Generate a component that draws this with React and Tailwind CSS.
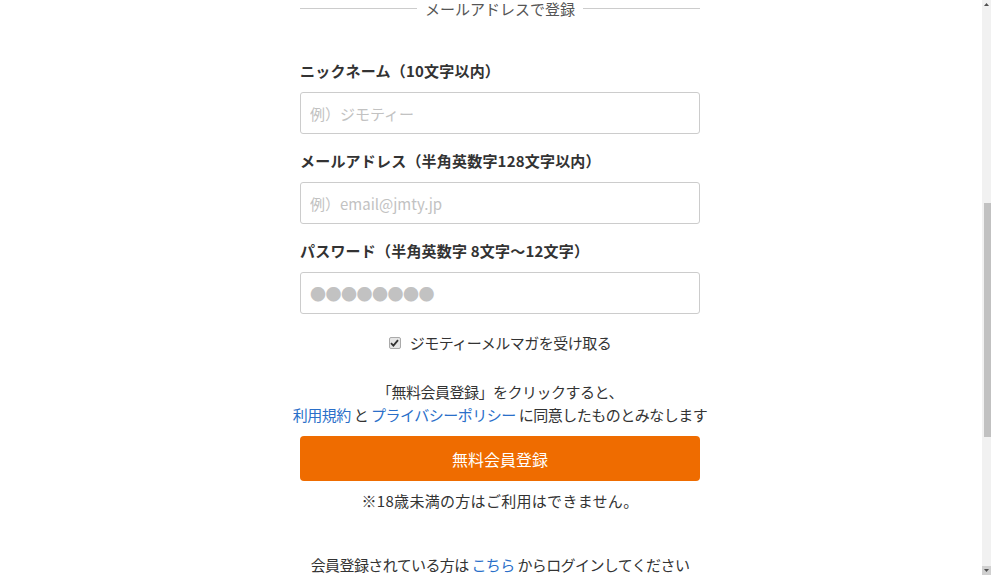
import React from 'react';

const FONT = 'font-["Noto_Sans_CJK_JP","Noto_Sans",sans-serif]';

function Field({ label, placeholder, dots, first }) {
  return (
    <div className={first ? '' : 'mt-4'}>
      <div className="text-[15px] font-bold leading-[22px] text-[#333] mb-[10px] tracking-[0.2px]">{label}</div>
      <input
        placeholder={placeholder}
        className={`block w-full h-[42px] border border-[#ccc] rounded-[3px] px-[9px] text-[15px] outline-none placeholder:text-[#c2c2c2] ${dots ? 'placeholder:text-[16px] placeholder:tracking-[-0.5px]' : ''}`}
      />
    </div>
  );
}

export default function App() {
  return (
    <div className={`flex h-[575px] overflow-hidden bg-white text-[#333] ${FONT}`}>
      <div className="flex-1">
        <div className="ml-[300px] w-[400px] flex flex-col">
          <div className="flex items-center h-[17px] gap-2">
            <div className="flex-1 h-px bg-[#ccc]" />
            <span className="text-[15px] leading-[17px] text-[#555]">メールアドレスで登録</span>
            <div className="flex-1 h-px bg-[#ccc]" />
          </div>

          <div className="mt-[43px] flex flex-col">
            <Field first label="ニックネーム（10文字以内）" placeholder="例）ジモティー" />
            <Field label="メールアドレス（半角英数字128文字以内）" placeholder="例）email@jmty.jp" />
            <Field label="パスワード（半角英数字 8文字〜12文字）" placeholder="●●●●●●●●" dots />
          </div>

          <div className="mt-[18px] flex items-center justify-center gap-[9px] text-[15px] leading-[22px] tracking-[-0.5px]">
            <span className="w-[12px] h-[12px] rounded-[2px] border border-[#aaa] bg-[#e6e6e6] flex items-center justify-center">
              <svg width="9" height="8" viewBox="0 0 9 8"><path d="M1 4.2 L3.4 6.6 L8 1.2" stroke="#333" strokeWidth="1.8" fill="none" /></svg>
            </span>
            <span>ジモティーメルマガを受け取る</span>
          </div>

          <div className="mt-[26px] text-center text-[15px] leading-[23px] whitespace-nowrap -mx-[20px] tracking-[-0.5px]">
            <div>「無料会員登録」をクリックすると、</div>
            <div>
              <a className="text-[#2a6fc9]">利用規約</a> と <a className="text-[#2a6fc9]">プライバシーポリシー</a> に同意したものとみなします
            </div>
          </div>

          <button className="mt-[10px] w-full h-[45px] rounded-[4px] bg-[#ef6c00] text-white text-[16px]">無料会員登録</button>

          <div className="mt-[9px] text-center text-[15px] leading-[22px] tracking-[0.3px]">※18歳未満の方はご利用はできません。</div>

          <div className="mt-[42px] text-center text-[15px] leading-[22px] whitespace-nowrap tracking-[-0.6px]">
            会員登録されている方は <a className="text-[#2a6fc9]">こちら</a> からログインしてください
          </div>
        </div>
      </div>

      <div className="w-[9px] bg-[#f1f1f1] flex flex-col items-end">
        <div className="h-[9px] w-full flex items-center justify-center">
          <svg width="5" height="3" viewBox="0 0 5 3"><path d="M0 3 L2.5 0 L5 3 Z" fill="#505050" /></svg>
        </div>
        <div className="h-[194px]" />
        <div className="w-[7px] h-[234px] bg-[#c1c1c1]" />
        <div className="flex-1" />
        <div className="h-[9px] w-full bg-[#d0d0d0] flex items-center justify-center">
          <svg width="5" height="3" viewBox="0 0 5 3"><path d="M0 0 L5 0 L2.5 3 Z" fill="#505050" /></svg>
        </div>
      </div>
    </div>
  );
}
